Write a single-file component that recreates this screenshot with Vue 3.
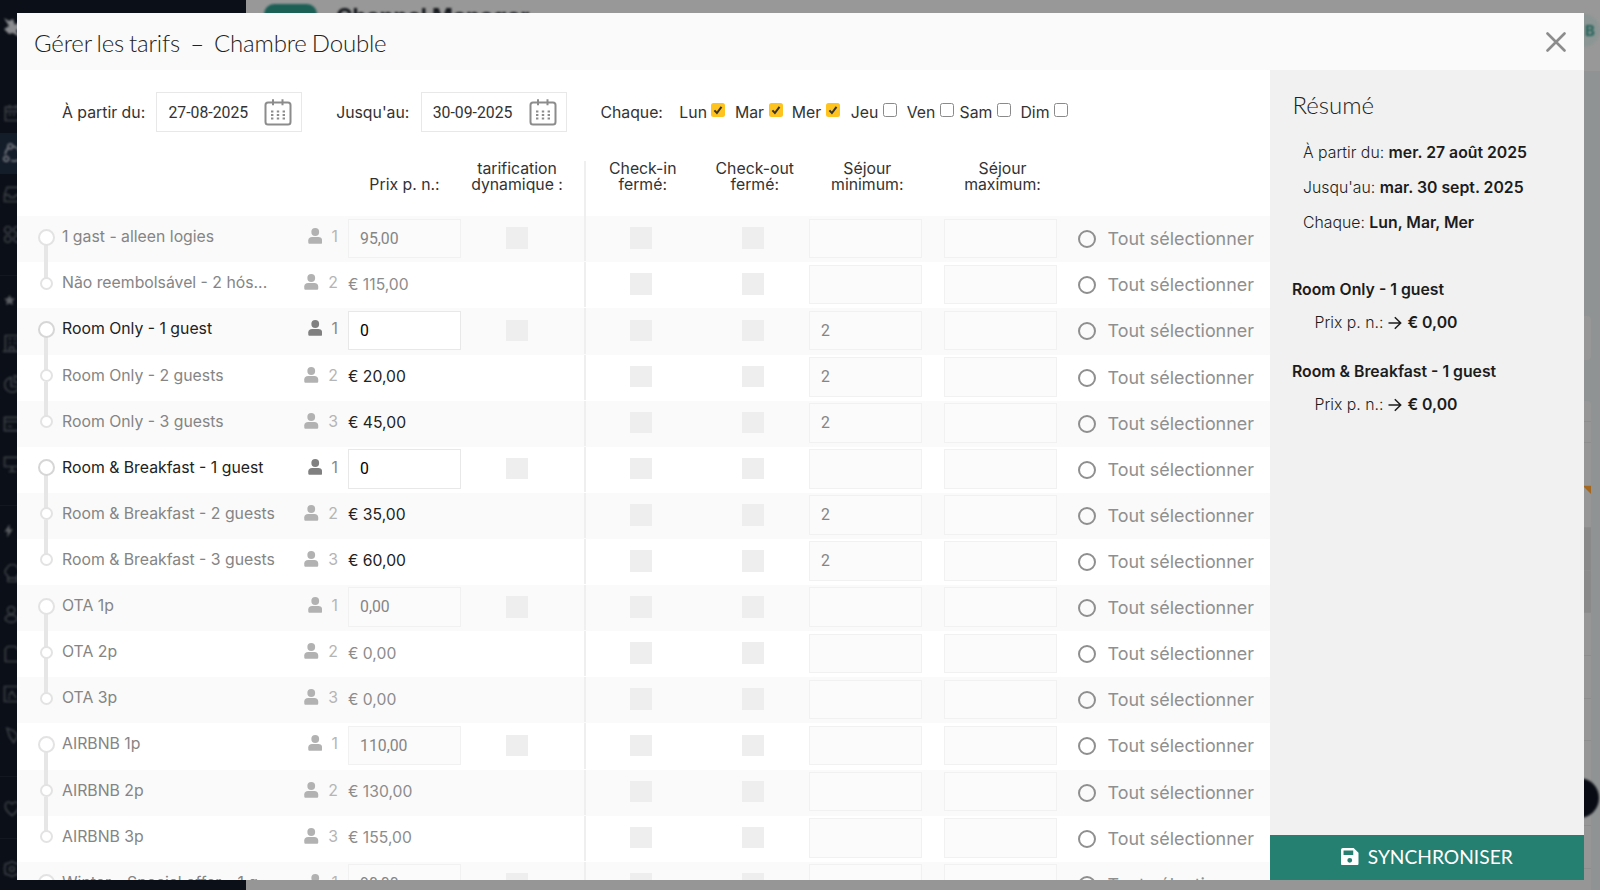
<template>
  <div class="page">
    <!-- Page behind the dialog -->
    <div class="backdrop">
      <nav class="side-nav">
        <div class="nav-logo">
          <svg viewBox="0 0 24 24"><path d="M1 2l5 3 4-2 2 6 6-4v8l-5 1 3 7-6-4-4 1-5-5 5-3z" /></svg>
        </div>
        <template v-for="(entry, i) in navEntries" :key="i">
          <div v-if="entry === 'line'" class="nav-line"></div>
          <div
            v-else
            class="nav-item"
            :class="{ 'is-active': entry.active, 'is-section': entry.section }"
          >
            <svg viewBox="0 0 24 24"><path :d="entry.path" /></svg>
          </div>
        </template>
      </nav>
      <div class="content">
        <header class="top-bar">
          <div class="app-tile"></div>
          <div class="app-title">Channel Manager</div>
          <div class="avatar">B</div>
        </header>
        <div class="panel-search"></div>
        <div class="panel">
          <div v-for="n in 13" :key="n" class="panel-row" :class="{ 'is-dark': n === 5 || n === 6 }">
            <span v-if="n === 4" class="panel-flag"></span>
          </div>
        </div>
      </div>
      <div class="chat-bubble"></div>
    </div>

    <div class="modal">
      <div class="modal-header">
        <h1 class="modal-title">Gérer les tarifs &nbsp;–&nbsp; Chambre Double</h1>
        <svg class="close-icon" viewBox="0 0 20 20">
          <path d="M1.5 1.5l17 17M18.5 1.5l-17 17" />
        </svg>
      </div>

      <div class="modal-body">
        <div class="main">
          <!-- Filters -->
          <div class="filters">
            <div v-for="field in dateFields" :key="field.label" class="date-field">
              <label>{{ field.label }}</label>
              <div class="date-input">
                <span>{{ field.value }}</span>
                <svg class="calendar-icon" viewBox="0 0 28 27">
                  <rect x="1.5" y="3.5" width="25" height="22" rx="2.5" />
                  <path d="M9 0.3v6M18.5 0.3v6" />
                  <path
                    class="dots"
                    d="M7 12.5h2.4M12.8 12.5h2.4M18.6 12.5h2.4M7 16h2.4M12.8 16h2.4M18.6 16h2.4M7 19.5h2.4M12.8 19.5h2.4M18.6 19.5h2.4"
                  />
                </svg>
              </div>
            </div>
            <div class="days">
              <span class="days-label">Chaque:</span>
              <label v-for="day in days" :key="day.name" class="day">
                {{ day.name }}
                <span class="day-box" :class="{ 'is-checked': day.checked }">
                  <svg v-if="day.checked" viewBox="0 0 14 14"><path d="M3.4 7.4l2.5 2.6 4.6-6.2" /></svg>
                </span>
              </label>
            </div>
          </div>

          <!-- Column headings -->
          <div class="grid-row grid-head">
            <div class="head-price">Prix p. n.:</div>
            <div class="cell-dynamic">tarification<br />dynamique :</div>
            <div class="head-label">Check-in<br />fermé:</div>
            <div class="head-label head-out">Check-out<br />fermé:</div>
            <div class="head-label head-stay">Séjour<br />minimum:</div>
            <div class="head-label head-max">Séjour<br />maximum:</div>
          </div>

          <!-- Rates -->
          <div
            v-for="(rate, i) in rates"
            :key="i"
            class="grid-row rate-row"
            :class="{ 'is-selected': rate.selected, 'is-parent': rate.guests === 1, 'is-last': rate.last }"
          >
            <div class="cell-tree"><span class="tree-dot"></span></div>
            <div class="cell-name">{{ rate.name }}</div>
            <div class="cell-guests">
              <svg viewBox="0 0 14 16">
                <circle cx="7" cy="4" r="3.9" />
                <path d="M0 14.2V12.6C0 10.4 1.6 9 3.8 9h6.4C12.4 9 14 10.4 14 12.6v1.6c0 1-.6 1.6-1.5 1.6h-11C.6 15.8 0 15.2 0 14.2z" />
              </svg>
              <span>{{ rate.guests }}</span>
            </div>
            <div class="cell-price">
              <div v-if="rate.guests === 1" class="field">{{ rate.price }}</div>
              <span v-else class="price-text" :class="{ 'is-derived': rate.derived }">€ {{ rate.price }}</span>
            </div>
            <div class="cell-dynamic"><span v-if="rate.guests === 1" class="box"></span></div>
            <div class="cell-check"><span class="box"></span></div>
            <div class="cell-check"><span class="box"></span></div>
            <div class="cell-stay"><div class="field">{{ rate.min }}</div></div>
            <div class="cell-stay cell-max"><div class="field"></div></div>
            <div class="cell-all"><span class="ring"></span><span>Tout sélectionner</span></div>
          </div>
        </div>

        <!-- Summary -->
        <aside class="summary">
          <h2 class="summary-title">Résumé</h2>
          <p v-for="line in summary" :key="line.label" class="summary-line">
            {{ line.label }} <b>{{ line.value }}</b>
          </p>
          <div class="changes">
            <div v-for="name in changes" :key="name" class="change">
              <b class="change-name">{{ name }}</b>
              <div class="change-price">
                <span>Prix p. n.:</span>
                <svg viewBox="0 0 14 14"><path d="M0.5 7h12.5M6.8 1.2l5.9 5.8-5.9 5.8" /></svg>
                <b>€ 0,00</b>
              </div>
            </div>
          </div>
          <button class="sync-button">
            <svg viewBox="0 0 18 18">
              <path
                fill-rule="evenodd"
                d="M2 0h11l5 5v11a2 2 0 0 1-2 2H2a2 2 0 0 1-2-2V2a2 2 0 0 1 2-2zM2.6 2.6v4.6h10V2.6zM9 10.2a2.5 2.5 0 1 0 0 5 2.5 2.5 0 0 0 0-5z"
              />
            </svg>
            <span>SYNCHRONISER</span>
          </button>
        </aside>
      </div>
    </div>
  </div>
</template>

<script setup>
import { ref } from 'vue';

const navEntries = [
  { path: 'M4 5h18v16H4zM4 10h18M9 2v5M17 2v5M8 14h3M13 14h3' },
  { path: 'M8 6a9 9 0 0 0-4 8M20 20a9 9 0 0 1-9 1M13 4a9 9 0 0 1 8 8M10 1a3 3 0 1 0 .1 0M5 16a3 3 0 1 0 .1 0', active: true },
  { path: 'M6 4h14l2 9v8H3v-8zM3 13h5l2 3h5l2-3h5' },
  { path: 'M7 3a4 4 0 1 0 .1 0M18 3a4 4 0 1 0 .1 0M7 14a4 4 0 1 0 .1 0M18 14a4 4 0 1 0 .1 0' },
  'line',
  { path: 'M9 6l2 4 4.5.5-3.3 3 .9 4.5-4.1-2.2L5 18l.8-4.5-3.3-3L7 10z', section: true },
  { path: 'M4 22V3h16v19M8 7h3M14 7h3M8 12h3M14 12h3M9 22v-5h5v5M1 22h22' },
  { path: 'M11 4a9 9 0 1 0 10 11h-10zM15 2a8 8 0 0 1 7 8h-7z' },
  { path: 'M3 4h20v16H3zM3 9h20M7 15h5' },
  { path: 'M3 4h20v11H3zM12 15v6M8 21h9' },
  'line',
  { path: 'M9 5l-6 9h4l-1 7 7-10H9z', section: true },
  { path: 'M7 21v-7a5 5 0 0 1-1-9 7 7 0 0 1 13 0 5 5 0 0 1-1 9v7zM7 17h11' },
  { path: 'M11 3a4.5 4.5 0 1 0 .1 0M11 13a7 4.5 0 1 0 .1 0' },
  { path: 'M7 3h9l6 6v12H4V6z' },
  { path: 'M3 3h19v18H3zM8 14l4-5 5 8M7 17h3' },
  { path: 'M6 4l8 3 5 6-5 8-5-7z' },
  'line',
  { path: 'M12 21C-2 11 5 0 12 7c7-7 14 4 0 14z' },
  'line',
  { path: 'M12 3l4 2 4 1 1 6-1 6-4 1-4 2-4-2-4-1-1-6 1-6 4-1zM12 9a3 3 0 1 0 .1 0' }
];

const dateFields = ref([
  { label: 'À partir du:', value: '27-08-2025' },
  { label: "Jusqu'au:", value: '30-09-2025' }
]);

const days = ref([
  { name: 'Lun', checked: true },
  { name: 'Mar', checked: true },
  { name: 'Mer', checked: true },
  { name: 'Jeu', checked: false },
  { name: 'Ven', checked: false },
  { name: 'Sam', checked: false },
  { name: 'Dim', checked: false }
]);

const rates = ref([
  { name: '1 gast - alleen logies', guests: 1, price: '95,00' },
  { name: 'Não reembolsável - 2 hós...', guests: 2, price: '115,00', last: true },
  { name: 'Room Only - 1 guest', guests: 1, price: '0', min: '2', selected: true },
  { name: 'Room Only - 2 guests', guests: 2, price: '20,00', min: '2', derived: true },
  { name: 'Room Only - 3 guests', guests: 3, price: '45,00', min: '2', derived: true, last: true },
  { name: 'Room & Breakfast - 1 guest', guests: 1, price: '0', selected: true },
  { name: 'Room & Breakfast - 2 guests', guests: 2, price: '35,00', min: '2', derived: true },
  { name: 'Room & Breakfast - 3 guests', guests: 3, price: '60,00', min: '2', derived: true, last: true },
  { name: 'OTA 1p', guests: 1, price: '0,00' },
  { name: 'OTA 2p', guests: 2, price: '0,00' },
  { name: 'OTA 3p', guests: 3, price: '0,00', last: true },
  { name: 'AIRBNB 1p', guests: 1, price: '110,00' },
  { name: 'AIRBNB 2p', guests: 2, price: '130,00' },
  { name: 'AIRBNB 3p', guests: 3, price: '155,00', last: true },
  { name: 'Winter - Special offer - 1 g', guests: 1, price: '90,00' }
]);

const summary = [
  { label: 'À partir du:', value: 'mer. 27 août 2025' },
  { label: "Jusqu'au:", value: 'mar. 30 sept. 2025' },
  { label: 'Chaque:', value: 'Lun, Mar, Mer' }
];

const changes = ['Room Only - 1 guest', 'Room & Breakfast - 1 guest'];
</script>

<style>
body {
  overflow: hidden;
}
</style>

<style scoped>
.page {
  position: relative;
  width: 1600px;
  height: 890px;
  overflow: hidden;
  font-family: Inter, "Liberation Sans", sans-serif;
  font-size: 15.8px;
  color: #333;
}

.page * {
  box-sizing: border-box;
}

/* Backdrop */
.backdrop {
  display: flex;
  height: 890px;
  background: #8f9393;
}

.side-nav {
  width: 246px;
  background: #0b0f17;
  overflow: hidden;
}

.nav-logo {
  height: 93px;
  padding: 16px 0 0 3px;
}

.nav-logo svg {
  width: 24px;
  height: 24px;
  fill: #8a8c90;
  filter: blur(1.2px);
}

.nav-item {
  display: flex;
  align-items: center;
  height: 40.3px;
  padding-left: 2px;
}

.nav-item.is-active {
  background: #131c29;
}

.nav-item svg {
  width: 20px;
  height: 20px;
  fill: none;
  stroke: #3a3e45;
  stroke-width: 2;
  filter: blur(0.8px);
}

.nav-item.is-active svg {
  stroke: #777b81;
}

.nav-item.is-section {
  height: 47px;
}

.nav-item.is-section svg {
  fill: #5b5e63;
  stroke: none;
}

.nav-line {
  height: 1px;
  margin: 21px 0 0;
  background: #121720;
}

.nav-line:nth-last-child(2) {
  margin: 10px 0;
}

.nav-line:nth-last-child(4) {
  margin-bottom: 11px;
}

.content {
  flex: 1;
}

.top-bar {
  display: flex;
  height: 71px;
  padding: 4px 0 0 18px;
  background: #989898;
}

.app-tile {
  width: 53px;
  height: 53px;
  border-radius: 10px;
  background: #1b5f55;
  filter: blur(1px);
}

.app-title {
  flex: 1;
  padding: 1px 0 0 19px;
  font-size: 22.4px;
  font-weight: 700;
  line-height: 24px;
  color: #15181c;
  filter: blur(1.2px);
}

.avatar {
  width: 33px;
  height: 33px;
  margin-top: 10px;
  padding-right: 5px;
  border-radius: 50%;
  background: #8b9694;
  color: #1f6157;
  font-size: 15px;
  font-weight: 700;
  line-height: 33px;
  text-align: right;
  filter: blur(0.8px);
}

.panel-search {
  width: 1345px;
  height: 44px;
  margin-top: 245px;
  border-radius: 4px;
  background: #979797;
}

.panel {
  width: 1345px;
  margin-top: 41px;
  border-radius: 4px;
  background: #969696;
  overflow: hidden;
}

.panel-row {
  display: flex;
  justify-content: flex-end;
  align-items: flex-start;
  height: 42.6px;
  border-bottom: 1px solid #8d8d8d;
}

.panel-row.is-dark {
  background: #8a8a8a;
}

.panel-row:nth-child(-n + 2) {
  height: 21px;
}

.panel-flag {
  border: 4px solid #a5661d;
  border-left-color: transparent;
  border-bottom-color: transparent;
}

.chat-bubble {
  position: absolute;
  left: 1559px;
  top: 778px;
  width: 40px;
  height: 40px;
  border-radius: 50%;
  background: #080b13;
  filter: blur(0.8px);
}

/* Dialog */
.modal {
  position: absolute;
  left: 17px;
  top: 13px;
  display: flex;
  flex-direction: column;
  width: 1567px;
  height: 867px;
  background: #fff;
  overflow: hidden;
}

.modal-header {
  display: flex;
  flex: none;
  justify-content: space-between;
  align-items: center;
  height: 56.5px;
  padding: 2px 18px 0 17px;
  background: #fafafa;
}

.modal-title,
.summary-title {
  margin: 0;
  font-family: Lato, sans-serif;
  font-size: 24px;
  font-weight: 300;
  color: #222;
}

.modal-title {
  padding-top: 1px;
  letter-spacing: -0.17px;
  word-spacing: -1.3px;
}

.close-icon {
  width: 20px;
  height: 20px;
  stroke: #8c8c8c;
  stroke-width: 2.6;
  stroke-linecap: round;
}

.modal-body {
  display: flex;
  flex: 1;
  min-height: 0;
}

.main {
  width: 1253px;
  overflow: hidden;
}

.filters {
  display: flex;
  align-items: center;
  height: 85px;
  padding-left: 45px;
}

.date-field {
  display: flex;
  align-items: center;
  gap: 11.3px;
  margin-right: 33.7px;
}

.date-input {
  display: flex;
  justify-content: space-between;
  align-items: center;
  width: 146px;
  height: 40px;
  padding: 0 9px 0 11px;
  border: 1px solid #e8e8e8;
  font-family: Roboto, sans-serif;
}

.calendar-icon {
  width: 28px;
  height: 27px;
  fill: none;
  stroke: #8c8c8c;
  stroke-width: 2;
}

.days {
  display: flex;
  align-items: center;
}

.days-label {
  width: 68px;
}

.day {
  display: flex;
  justify-content: flex-end;
  align-items: center;
  gap: 4.5px;
  width: 57.1px;
}

.day-box {
  flex: none;
  width: 14px;
  height: 14px;
  margin-bottom: 4px;
  border: 1px solid #8a8a8a;
  border-radius: 2.5px;
  background: #fff;
}

.day-box.is-checked {
  border: none;
  background: #fec31e;
}

.day-box svg {
  display: block;
  width: 14px;
  height: 14px;
  fill: none;
  stroke: #333;
  stroke-width: 2;
}

/* Rate table */
.grid-row {
  display: grid;
  grid-template-columns: 45px 214px 72px 113px 125px 110.5px 112.5px 112.5px 135px 1fr;
}

.grid-head {
  height: 61.7px;
  padding-top: 6px;
  line-height: 16.5px;
  text-align: center;
}

.head-price {
  grid-column: 4;
  padding-top: 16.5px;
}

.head-label {
  padding-left: 3px;
}

.head-out,
.head-stay {
  padding-left: 4px;
}

.head-max {
  padding-left: 27px;
}

.cell-dynamic {
  padding-right: 11px;
  border-right: 2px solid #efefef;
  text-align: center;
}

.rate-row {
  height: 46.12px;
  padding-bottom: 1px;
}

.rate-row:nth-child(odd) {
  background: #fafafa;
}

.cell-tree {
  position: relative;
  display: flex;
  justify-content: center;
  padding: 14.5px 0 0 13px;
}

.tree-dot {
  z-index: 1;
  width: 13px;
  height: 13px;
  border: 2px solid #e3e3e3;
  border-radius: 50%;
  background: #fff;
}

.is-parent .cell-tree {
  padding-top: 12.5px;
}

.is-parent .tree-dot {
  width: 17px;
  height: 17px;
}

.is-selected .tree-dot {
  border-color: #d6d6d6;
}

.cell-tree::after {
  content: "";
  position: absolute;
  left: 27px;
  top: 27px;
  width: 4px;
  height: 35px;
  background: #e6e6e6;
}

.is-last .cell-tree::after {
  display: none;
}

.cell-name {
  padding-top: 11px;
  line-height: 20px;
  white-space: nowrap;
  color: #858585;
}

.cell-guests {
  display: flex;
  justify-content: flex-end;
  gap: 9.5px;
  padding: 11px 10px 0 0;
  line-height: 20px;
  color: #b5b5b5;
}

.cell-guests svg {
  width: 14.5px;
  height: 16px;
  margin-top: 1px;
  fill: #b2b2b2;
}

.is-selected .cell-name {
  color: #222;
}

.is-selected .cell-guests {
  color: #868686;
}

.is-selected .cell-guests svg {
  fill: #808080;
}

.cell-price {
  padding-top: 2.4px;
}

.field {
  width: 112.5px;
  height: 39.6px;
  padding-left: 11px;
  border: 1px solid #f1f1f1;
  background: #fbfbfb;
  font-family: Roboto, sans-serif;
  font-size: 15.8px;
  line-height: 38px;
  color: #858585;
}

.is-selected .cell-price .field {
  border-color: #e8e8e8;
  background: #fff;
  color: #000;
}

.price-text {
  display: block;
  font-size: 15.7px;
  line-height: 39px;
  color: #8c8c8c;
}

.price-text.is-derived {
  color: #222;
}

.cell-check {
  display: flex;
  justify-content: center;
}

.box {
  display: inline-block;
  width: 22px;
  height: 21.5px;
  margin-top: 11.2px;
  background: #eee;
}

.cell-stay {
  padding-top: 2.4px;
}

.cell-max {
  padding-left: 22.5px;
}

.cell-all {
  display: flex;
  gap: 11.5px;
  padding: 14px 0 0 21.5px;
  font-size: 17.9px;
  line-height: 18px;
  white-space: nowrap;
  color: #8f8f8f;
}

.ring {
  width: 18px;
  height: 18px;
  border: 2px solid #8f8f8f;
  border-radius: 50%;
}

/* Summary */
.summary {
  display: flex;
  flex-direction: column;
  width: 314px;
  background: #f1f1f1;
  color: #1c1c1c;
  font-weight: 300;
}

.summary b {
  font-weight: 600;
}

.summary-title {
  padding: 20px 0 0 22.5px;
  line-height: 30px;
  margin-bottom: 15px;
}

.summary-line {
  margin: 0;
  padding-left: 33px;
  line-height: 35px;
}

.changes {
  flex: 1;
  padding: 37.5px 0 0 22px;
}

.change {
  height: 82px;
}

.change-name {
  display: block;
  line-height: 26px;
}

.change-price {
  display: flex;
  align-items: center;
  gap: 5px;
  padding: 7px 0 0 22.5px;
  line-height: 26px;
}

.change-price svg {
  width: 14px;
  height: 14px;
  fill: none;
  stroke: #1c1c1c;
  stroke-width: 1.5;
}

.sync-button {
  display: flex;
  justify-content: center;
  align-items: center;
  gap: 9px;
  height: 45px;
  padding: 0 0 2px;
  border: none;
  background: #258072;
  color: #fff;
  font-family: Lato, sans-serif;
  font-size: 19.2px;
}

.sync-button svg {
  width: 17.5px;
  height: 17.5px;
  fill: #fff;
}
</style>
